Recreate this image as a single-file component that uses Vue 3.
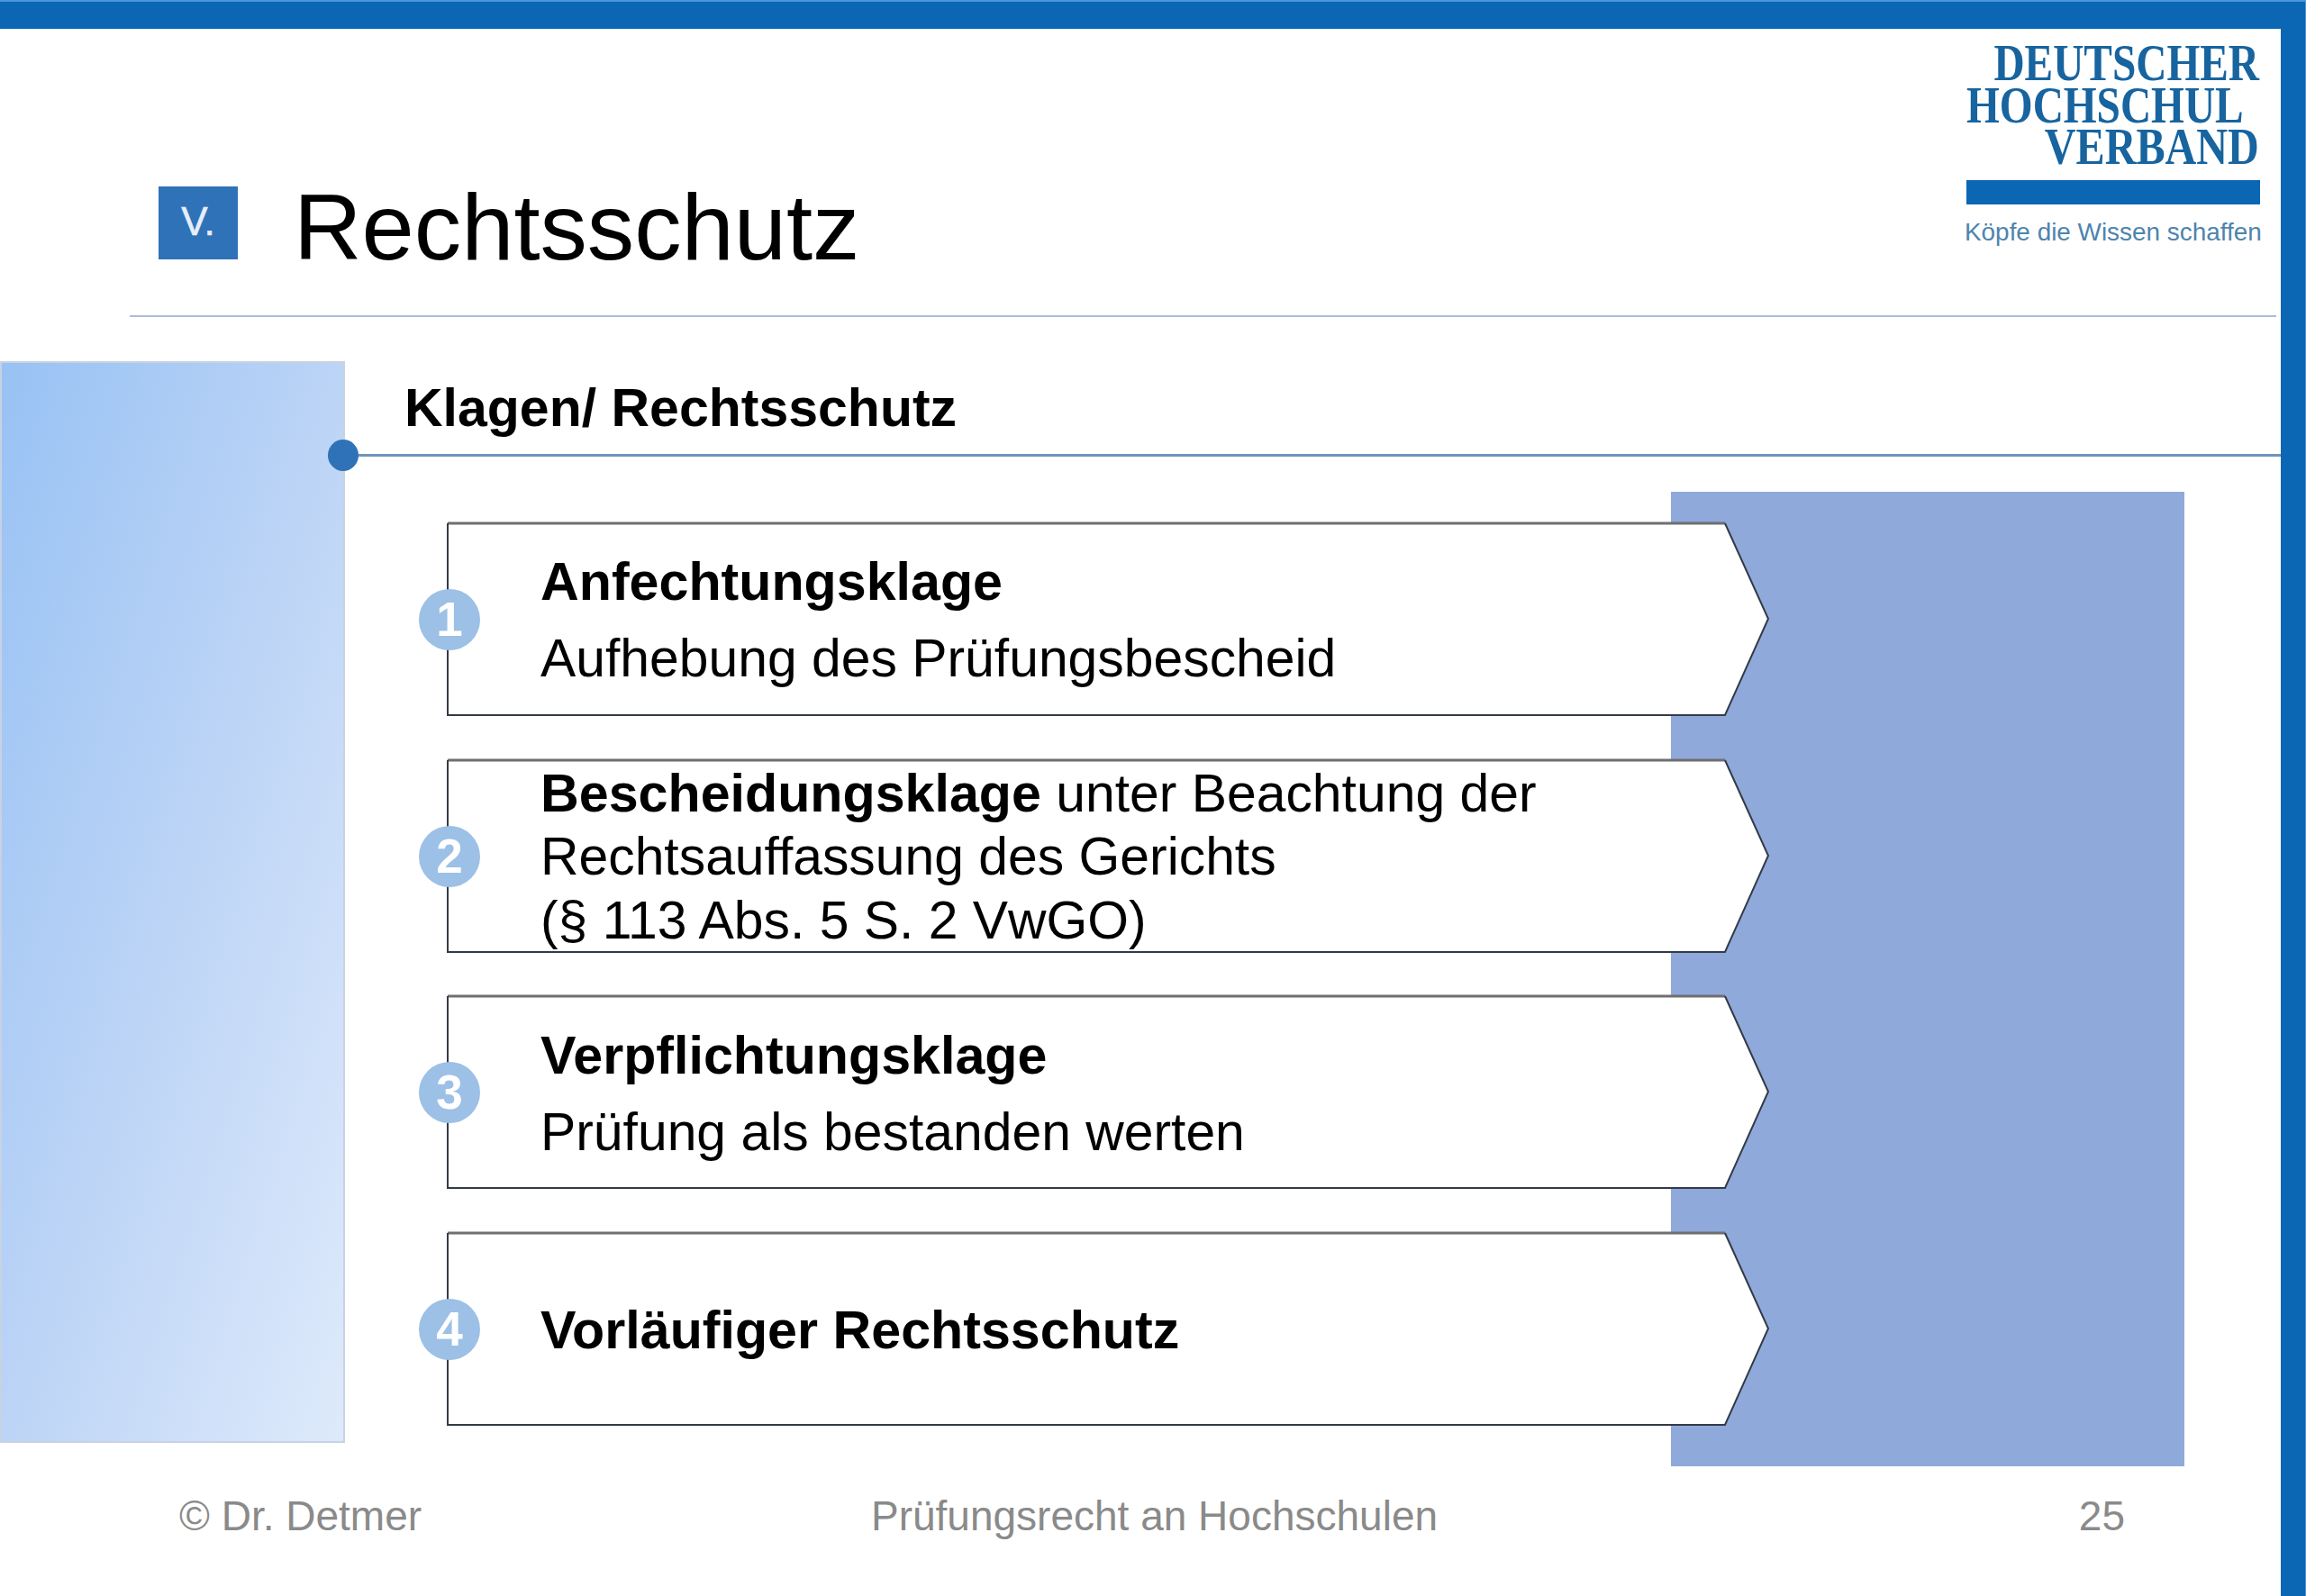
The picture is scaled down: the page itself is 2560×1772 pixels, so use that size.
<script setup>
const boxes = [
  { n: 1, lines: [{ b: 'Anfechtungsklage' }, { t: 'Aufhebung des Prüfungsbescheid' }], spaced: true },
  { n: 2, lines: [{ b: 'Bescheidungsklage', t: ' unter Beachtung der' }, { t: 'Rechtsauffassung des Gerichts' }, { t: '(§ 113 Abs. 5 S. 2 VwGO)' }] },
  { n: 3, lines: [{ b: 'Verpflichtungsklage' }, { t: 'Prüfung als bestanden werten' }], spaced: true },
  { n: 4, lines: [{ b: 'Vorläufiger Rechtsschutz' }] }
]
</script>

<template>
  <div class="frame">
    <div class="slide">
      <header class="head">
        <div class="badge">V.</div>
        <h1 class="title">Rechtsschutz</h1>
        <div class="logo">
          <div class="logo-word l1">DEUTSCHER</div>
          <div class="logo-word l2">HOCHSCHUL</div>
          <div class="logo-word l3">VERBAND</div>
          <div class="logo-bar"></div>
          <div class="logo-tag">Köpfe die Wissen schaffen</div>
        </div>
      </header>

      <main class="main">
        <aside class="panel"></aside>
        <section class="content">
          <div class="sub">
            <span class="dot"></span>
            <h2 class="sub-title">Klagen/ Rechtsschutz</h2>
          </div>
          <div class="stack">
            <div class="backdrop"></div>
            <article v-for="box in boxes" :key="box.n" class="box" :class="{ spaced: box.spaced }">
              <svg class="shape" viewBox="0 0 1468 216" width="1468" height="216">
                <polygon points="1,2 1419,2 1467,108 1419,215 1,215" fill="#fff" />
                <path d="M1,2 H1419" stroke="#6f6f6f" stroke-width="3" fill="none" />
                <path d="M1,2 V215 H1419 L1467,108 L1419,2" stroke="#333b46" stroke-width="2" fill="none" />
              </svg>
              <span class="num">{{ box.n }}</span>
              <div class="text">
                <p v-for="(line, i) in box.lines" :key="i"><b v-if="line.b">{{ line.b }}</b>{{ line.t }}</p>
              </div>
            </article>
          </div>
        </section>
      </main>

      <footer class="foot">
        <span>© Dr. Detmer</span>
        <span>Prüfungsrecht an Hochschulen</span>
        <span class="page">25</span>
      </footer>
    </div>
  </div>
</template>

<style>
html, body { margin: 0; background: #fff; }
</style>

<style scoped>
.frame {
  width: 2560px;
  height: 1772px;
  box-sizing: border-box;
  border-top: 2px solid #4b97d8;
  border-right: 1px solid #4b97d8;
  overflow: hidden;
}
.slide {
  height: 1770px;
  box-sizing: border-box;
  border-top: 30px solid #0b66b3;
  border-right: 27px solid #0b66b3;
  background: #fff;
  font-family: "Liberation Sans", Arial, sans-serif;
  color: #000;
}
.head {
  display: flex;
  height: 320px;
  box-sizing: border-box;
  margin: 0 5px 0 144px;
  padding: 0 18px 0 32px;
  border-bottom: 2px solid #a9bdd6;
}
.badge {
  width: 88px;
  height: 81px;
  margin-top: 175px;
  background: #2f72b8;
  color: #e6eff8;
  font-size: 44px;
  line-height: 77px;
  text-align: center;
  -webkit-text-stroke: 0.6px #e6eff8;
}
.title {
  margin: 162px 0 0 62px;
  font-size: 104.7px;
  font-weight: 400;
  line-height: 116px;
}
.logo {
  margin-left: auto;
  margin-top: 14px;
  width: 326px;
  display: flex;
  flex-direction: column;
  font-family: "Liberation Serif", "Times New Roman", serif;
  color: #17649f;
}
.logo-word {
  font-size: 58px;
  font-weight: 700;
  line-height: 47px;
  height: 47px;
  white-space: nowrap;
  transform: scaleX(0.816);
}
.l1 { align-self: flex-end; transform-origin: right center; margin-right: 1px; }
.l2 { align-self: flex-start; transform-origin: left center; }
.l3 { align-self: flex-end; transform-origin: right center; margin-top: -1px; transform: scaleX(0.83); margin-right: 1px; }
.logo-bar {
  height: 27px;
  margin-top: 14px;
  background: #0b66b3;
}
.logo-tag {
  margin-top: 15px;
  margin-left: -2px;
  font-family: "Liberation Sans", Arial, sans-serif;
  font-size: 27.9px;
  line-height: 32px;
  color: #4d84ad;
  white-space: nowrap;
}
.main {
  display: grid;
  grid-template-columns: 383px 1fr;
  height: 1201px;
  margin-top: 49px;
}
.panel {
  box-sizing: border-box;
  border: 2px solid #c7d3e3;
  background: linear-gradient(to bottom right, #98c2f4 0%, #bcd4f6 50%, #deeafb 100%);
}
.content { min-width: 0; }
.sub {
  position: relative;
  height: 106px;
  box-sizing: border-box;
  padding: 20px 0 0 66px;
  border-bottom: 3px solid #6f94bd;
}
.sub-title {
  margin: 0;
  font-size: 59px;
  line-height: 64px;
  font-weight: 700;
}
.dot {
  position: absolute;
  left: -19px;
  bottom: -19px;
  width: 34px;
  height: 35px;
  border-radius: 50%;
  background: #2f72b8;
}
.stack {
  position: relative;
  display: flex;
  flex-direction: column;
  gap: 46.67px;
  margin: 72px 0 0 113px;
}
.backdrop {
  position: absolute;
  left: 1359px;
  top: -33px;
  width: 570px;
  height: 1082px;
  background: #8fa9db;
}
.box {
  position: relative;
  width: 1468px;
  height: 216px;
  display: flex;
  flex-direction: column;
  justify-content: center;
  box-sizing: border-box;
  padding: 4px 0 0 104px;
}
.shape {
  position: absolute;
  left: 0;
  top: 0;
  display: block;
}
.num {
  position: absolute;
  left: -31px;
  top: 75px;
  width: 68px;
  height: 68px;
  border-radius: 50%;
  background: #9cc0e6;
  color: #fff;
  font-size: 53px;
  font-weight: 700;
  line-height: 68px;
  text-align: center;
}
.text {
  position: relative;
  font-size: 58.85px;
  line-height: 70.5px;
  white-space: nowrap;
}
.text b { font-size: 59.2px; }
.text p { margin: 0; }
.spaced .text p + p { margin-top: 14.5px; }
.foot {
  display: grid;
  grid-template-columns: 768px 1fr auto;
  margin-top: 55px;
  padding: 0 173px 0 199px;
  font-size: 46px;
  line-height: 52px;
  color: #8a8a8a;
}
</style>
